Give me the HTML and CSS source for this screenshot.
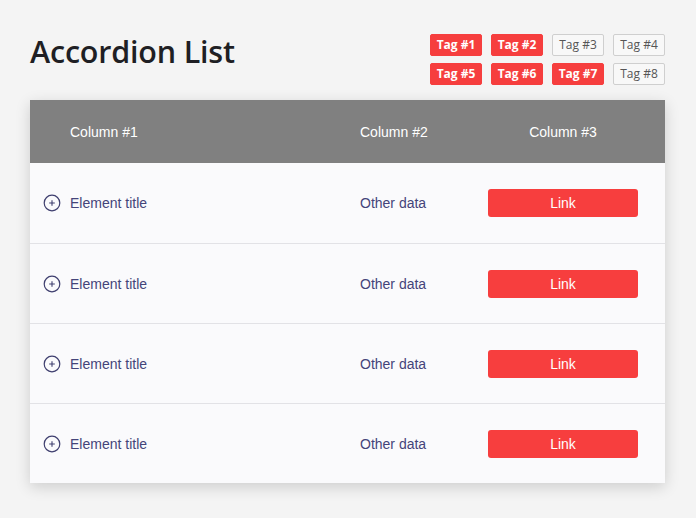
FILE: index.html
```html
<!DOCTYPE html>
<html lang="en">
<head>
  <meta charset="UTF-8">
  <meta name="viewport" content="width=device-width, initial-scale=1.0">
  <title>Accordion List</title>
  <link rel="stylesheet" href="styles.css">
</head>
<body>
  <div class="page">
    <!-- Title and tags -->
    <div class="header">
      <h1>Accordion List</h1>
      <div class="tags">
        <span class="tag active">Tag #1</span>
        <span class="tag active">Tag #2</span>
        <span class="tag">Tag #3</span>
        <span class="tag">Tag #4</span>
        <span class="tag active">Tag #5</span>
        <span class="tag active">Tag #6</span>
        <span class="tag active">Tag #7</span>
        <span class="tag">Tag #8</span>
      </div>
    </div>

    <!-- Accordion table -->
    <div class="list">
      <div class="row head">
        <div class="col-1">Column #1</div>
        <div class="col-2">Column #2</div>
        <div class="col-3">Column #3</div>
      </div>

      <div class="row item">
        <div class="col-1">
          <svg class="toggle" width="18" height="18" viewBox="0 0 18 18"><circle cx="9" cy="9" r="7.8" fill="none" stroke="#3e3e6e" stroke-width="1.2"/><path d="M9 6.2v5.6M6.2 9h5.6" stroke="#3e3e6e" stroke-width="1.1"/></svg>
          Element title
        </div>
        <div class="col-2">Other data</div>
        <div class="col-3"><a class="btn" href="#">Link</a></div>
      </div>

      <div class="row item">
        <div class="col-1">
          <svg class="toggle" width="18" height="18" viewBox="0 0 18 18"><circle cx="9" cy="9" r="7.8" fill="none" stroke="#3e3e6e" stroke-width="1.2"/><path d="M9 6.2v5.6M6.2 9h5.6" stroke="#3e3e6e" stroke-width="1.1"/></svg>
          Element title
        </div>
        <div class="col-2">Other data</div>
        <div class="col-3"><a class="btn" href="#">Link</a></div>
      </div>

      <div class="row item">
        <div class="col-1">
          <svg class="toggle" width="18" height="18" viewBox="0 0 18 18"><circle cx="9" cy="9" r="7.8" fill="none" stroke="#3e3e6e" stroke-width="1.2"/><path d="M9 6.2v5.6M6.2 9h5.6" stroke="#3e3e6e" stroke-width="1.1"/></svg>
          Element title
        </div>
        <div class="col-2">Other data</div>
        <div class="col-3"><a class="btn" href="#">Link</a></div>
      </div>

      <div class="row item">
        <div class="col-1">
          <svg class="toggle" width="18" height="18" viewBox="0 0 18 18"><circle cx="9" cy="9" r="7.8" fill="none" stroke="#3e3e6e" stroke-width="1.2"/><path d="M9 6.2v5.6M6.2 9h5.6" stroke="#3e3e6e" stroke-width="1.1"/></svg>
          Element title
        </div>
        <div class="col-2">Other data</div>
        <div class="col-3"><a class="btn" href="#">Link</a></div>
      </div>
    </div>
  </div>
</body>
</html>
```

FILE: styles.css
```css
/* General styles */
body {
  margin: 0;
  font-family: "Liberation Sans", Arial, sans-serif;
  background-color: #f4f4f4;
  color: #222;
}

.page {
  padding: 34px 31px 40px 30px;
}

/* Header */
.header {
  display: flex;
  justify-content: space-between;
  align-items: flex-start;
  margin-bottom: 15px;
}

h1 {
  margin: 0;
  margin-top: -2px;
  font-family: "Open Sans", "Noto Sans", sans-serif;
  font-size: 30.5px;
  font-weight: 600;
  line-height: 38px;
  color: #1f1f24;
  letter-spacing: -0.2px;
}

/* Tags */
.tags {
  display: grid;
  grid-template-columns: repeat(4, 52px);
  column-gap: 9px;
  row-gap: 7px;
}

.tag {
  height: 22px;
  box-sizing: border-box;
  border: 1px solid #cfcfcf;
  border-radius: 2px;
  font-family: "Open Sans", "Noto Sans", sans-serif;
  font-size: 12px;
  line-height: 20px;
  text-align: center;
  color: #555;
  background-color: #f8f8f8;
}

.tag.active {
  background-color: #f63e3e;
  border-color: #f63e3e;
  color: #fff;
  font-weight: 700;
}

/* Accordion list */
.list {
  background-color: #fafafc;
  box-shadow: 0 4px 14px rgba(0, 0, 0, 0.16);
}

.row {
  display: grid;
  grid-template-columns: 330px 128px 150px;
  align-items: center;
  box-sizing: border-box;
  font-size: 14px;
}

.head {
  height: 63px;
  background-color: #808080;
  color: #fff;
}

.head .col-1 {
  padding-left: 40px;
}

.head .col-3 {
  text-align: center;
}

.item {
  height: 80px;
  color: #44447a;
  border-top: 1px solid #e2e2e6;
}

.head + .item {
  border-top: none;
}

.item .col-1 {
  display: flex;
  align-items: center;
  gap: 9px;
  padding-left: 13px;
}

.toggle {
  display: block;
}

/* Link button */
.btn {
  display: block;
  height: 28px;
  line-height: 28px;
  border-radius: 3px;
  background-color: #f73e3e;
  color: #fff;
  text-align: center;
  text-decoration: none;
}
```
